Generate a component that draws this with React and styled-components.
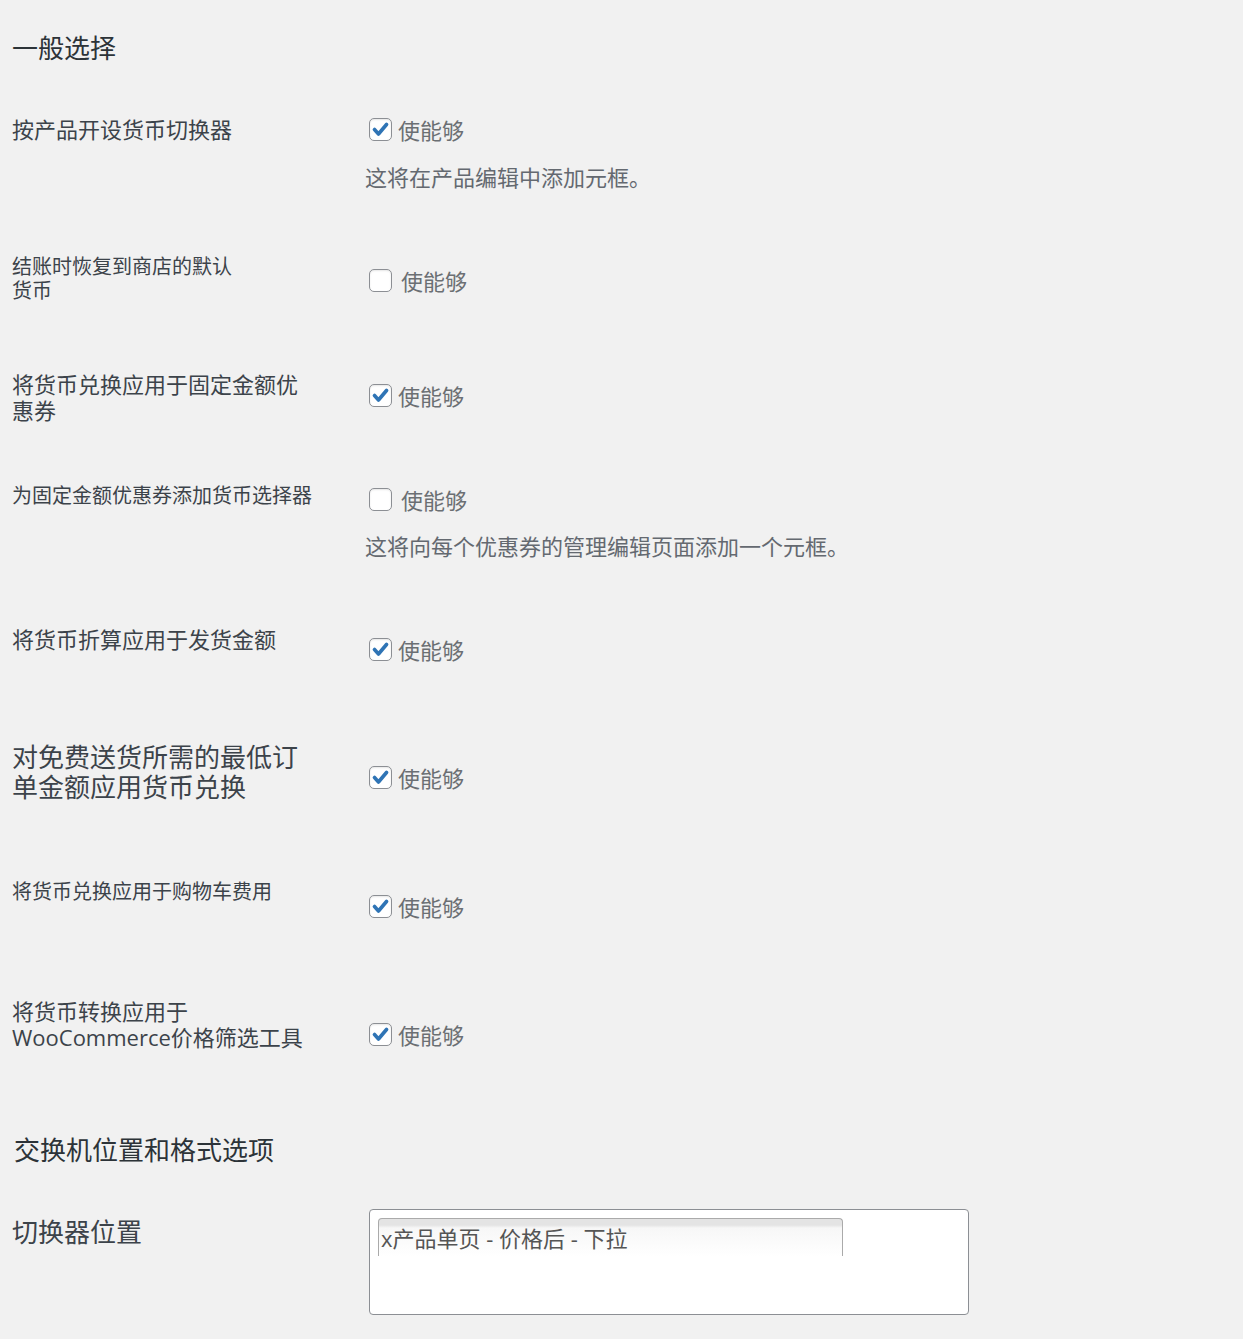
import React from "react";
import styled, { createGlobalStyle } from "styled-components";

const GlobalStyle = createGlobalStyle`
  body {
    margin: 0;
    background: #f1f1f1;
    font-family: "Open Sans", "Noto Sans CJK SC", sans-serif;
    color: #3c434a;
  }
`;

const Page = styled.div`
  padding: 33px 12px 26px 12px;
`;

const Heading = styled.h2`
  margin: ${(p) => p.mt || 0}px 0 0 ${(p) => p.ml || 0}px;
  font-size: 26px;
  line-height: 30px;
  font-weight: 400;
  color: #2c3338;
`;

const Row = styled.div`
  display: grid;
  grid-template-columns: 357px 1fr;
  align-items: start;
  margin-top: ${(p) => p.mt}px;
`;

const Label = styled.div`
  padding-top: ${(p) => p.lt || 0}px;
  font-size: ${(p) => p.size}px;
  line-height: ${(p) => p.lh}px;
  color: #3c434a;
  white-space: nowrap;
`;

const Control = styled.div`
  padding-top: ${(p) => p.ct || 0}px;
`;

const CheckLine = styled.label`
  display: flex;
  align-items: center;
  gap: ${(p) => (p.checked ? 6 : 9)}px;
  height: 30px;
  font-size: 22px;
  color: #6b6f73;
`;

const Box = styled.span`
  box-sizing: border-box;
  width: 23px;
  height: 23px;
  border: 1px solid #8c8f94;
  border-radius: 5px;
  background: #fff;
  box-shadow: inset 0 1px 2px rgba(0, 0, 0, 0.1);
  display: flex;
  align-items: center;
  justify-content: center;
`;

const Description = styled.p`
  margin: ${(p) => p.mt}px 0 0 -4px;
  font-size: 22px;
  line-height: 30px;
  color: #646970;
`;

const SelectBox = styled.div`
  box-sizing: border-box;
  width: 600px;
  height: 106px;
  border: 1px solid #8c8f94;
  border-radius: 4px;
  background: #fff;
  padding: 8px 0 0 8px;
`;

const Choice = styled.div`
  box-sizing: border-box;
  width: 465px;
  height: 38px;
  border: 1px solid #aaa;
  border-bottom: none;
  border-radius: 4px 4px 0 0;
  background: linear-gradient(#e4e4e4 0, #e4e4e4 6px, #f7f7f7 9px, #fff 38px);
  padding: 4px 0 0 2px;
  font-size: 22px;
  line-height: 30px;
  color: #555;
  white-space: nowrap;
`;

const Check = ({ checked }) => (
  <CheckLine checked={checked}>
    <Box>
      {checked && (
        <svg width="17" height="15" viewBox="0 0 17 15">
          <path d="M2.5 7.5 L6.5 12 L14.5 2.5" fill="none" stroke="#2f74b5" strokeWidth="3.6" strokeLinecap="round" strokeLinejoin="round" />
        </svg>
      )}
    </Box>
    使能够
  </CheckLine>
);

const App = () => {
  return (
    <>
      <GlobalStyle />
      <Page>
        <Heading>一般选择</Heading>

        <Row mt={51}>
          <Label size={22} lh={30}>按产品开设货币切换器</Label>
          <Control>
            <Check checked />
            <Description mt={18}>这将在产品编辑中添加元框。</Description>
          </Control>
        </Row>

        <Row mt={63}>
          <Label size={20} lh={24}>
            结账时恢复到商店的默认
            <br />
            货币
          </Label>
          <Control ct={10}>
            <Check />
          </Control>
        </Row>

        <Row mt={68}>
          <Label size={22} lh={26}>
            将货币兑换应用于固定金额优
            <br />
            惠券
          </Label>
          <Control ct={9}>
            <Check checked />
          </Control>
        </Row>

        <Row mt={60}>
          <Label size={20} lh={26}>为固定金额优惠券添加货币选择器</Label>
          <Control ct={1}>
            <Check />
            <Description mt={17}>这将向每个优惠券的管理编辑页面添加一个元框。</Description>
          </Control>
        </Row>

        <Row mt={63}>
          <Label size={22} lh={30}>将货币折算应用于发货金额</Label>
          <Control ct={10}>
            <Check checked />
          </Control>
        </Row>

        <Row mt={78}>
          <Label size={26} lh={30}>
            对免费送货所需的最低订
            <br />
            单金额应用货币兑换
          </Label>
          <Control ct={20}>
            <Check checked />
          </Control>
        </Row>

        <Row mt={77}>
          <Label size={20} lh={26}>将货币兑换应用于购物车费用</Label>
          <Control ct={12}>
            <Check checked />
          </Control>
        </Row>

        <Row mt={77}>
          <Label size={22} lh={26}>
            将货币转换应用于
            <br />
            WooCommerce价格筛选工具
          </Label>
          <Control ct={21}>
            <Check checked />
          </Control>
        </Row>

        <Heading mt={85} ml={2}>交换机位置和格式选项</Heading>

        <Row mt={44}>
          <Label size={26} lh={32} lt={7}>切换器位置</Label>
          <Control>
            <SelectBox>
              <Choice>x产品单页 - 价格后 - 下拉</Choice>
            </SelectBox>
          </Control>
        </Row>
      </Page>
    </>
  );
};

export default App;
